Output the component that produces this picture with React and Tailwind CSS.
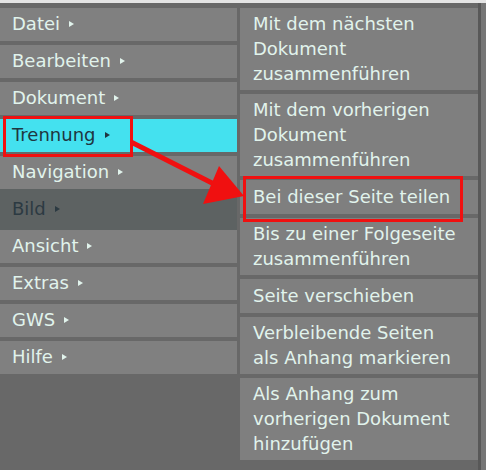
const mainItems = [
  { label: 'Datei' },
  { label: 'Bearbeiten' },
  { label: 'Dokument' },
  { label: 'Trennung', active: true },
  { label: 'Navigation' },
  { label: 'Bild', disabled: true },
  { label: 'Ansicht' },
  { label: 'Extras' },
  { label: 'GWS' },
  { label: 'Hilfe' },
];

const subItems = [
  { lines: ['Mit dem nächsten', 'Dokument', 'zusammenführen'], h: 'h-[82px]' },
  { lines: ['Mit dem vorherigen', 'Dokument', 'zusammenführen'], h: 'h-[82px]' },
  { lines: ['Bei dieser Seite teilen'], h: 'h-[34px]' },
  { lines: ['Bis zu einer Folgeseite', 'zusammenführen'], h: 'h-[57px]' },
  { lines: ['Seite verschieben'], h: 'h-[34px]' },
  { lines: ['Verbleibende Seiten', 'als Anhang markieren'], h: 'h-[57px]' },
  { lines: ['Als Anhang zum', 'vorherigen Dokument', 'hinzufügen'], h: 'h-[82px]' },
];

const Caret = () => (
  <span className="ml-[9px] inline-block h-0 w-0 border-y-[3px] border-l-[5px] border-y-transparent border-l-current" />
);

const MainItem = ({ item }) => {
  if (item.disabled) {
    return (
      <div className="-my-[4px] flex h-[41px] items-center bg-[#5d6262] pb-[2px] pl-[12px] text-[#2c3a42]">
        {item.label}
        <Caret />
      </div>
    );
  }
  return (
    <div
      className={
        item.active
          ? 'flex h-[33px] items-center bg-[#44e1ef] pb-[2px] pl-[12px] text-[#1f3640]'
          : 'flex h-[33px] items-center bg-[#808080] pb-[2px] pl-[12px] text-[#e1f3ec]'
      }
    >
      {item.label}
      <Caret />
    </div>
  );
};

export default function App() {
  return (
    <div
      className="relative flex h-[470px] w-[486px] flex-col overflow-hidden bg-[#686868] text-[18px]"
      style={{ fontFamily: '"DejaVu Sans", Verdana, sans-serif' }}
    >
      <div className="h-[3px] bg-[#e4e4e4]" />
      <div className="flex flex-1 pt-[5px]">
        <div className="flex w-[237px] flex-col gap-[4px]">
          {mainItems.map((item) => (
            <MainItem key={item.label} item={item} />
          ))}
        </div>
        <div className="w-[3px]" />
        <div className="flex w-[238px] flex-col gap-[4px]">
          {subItems.map((item) => (
            <div
              key={item.lines[0]}
              className={`flex ${item.h} flex-col justify-center bg-[#7f7f7f] pb-[2px] pl-[13px] leading-[25px] text-[#e1f3ec]`}
            >
              {item.lines.map((line) => (
                <span key={line}>{line}</span>
              ))}
            </div>
          ))}
        </div>
        <div className="-mt-[5px] w-[3px] bg-[#585858]" />
        <div className="-mt-[5px] flex-1 bg-[#767676]" />
      </div>

      {/* red markup over the menu */}
      <div className="absolute left-[3px] top-[116px] h-[41px] w-[130px] border-[3px] border-[#f01010]" />
      <div className="absolute left-[243px] top-[176px] h-[46px] w-[220px] border-[3px] border-[#f01010]" />
      <svg className="absolute left-0 top-0" width="486" height="470">
        <line x1="131" y1="142" x2="214" y2="184" stroke="#f01010" strokeWidth="5" />
        <polygon points="244,196 219,166 203,204" fill="#f01010" />
      </svg>
    </div>
  );
}
